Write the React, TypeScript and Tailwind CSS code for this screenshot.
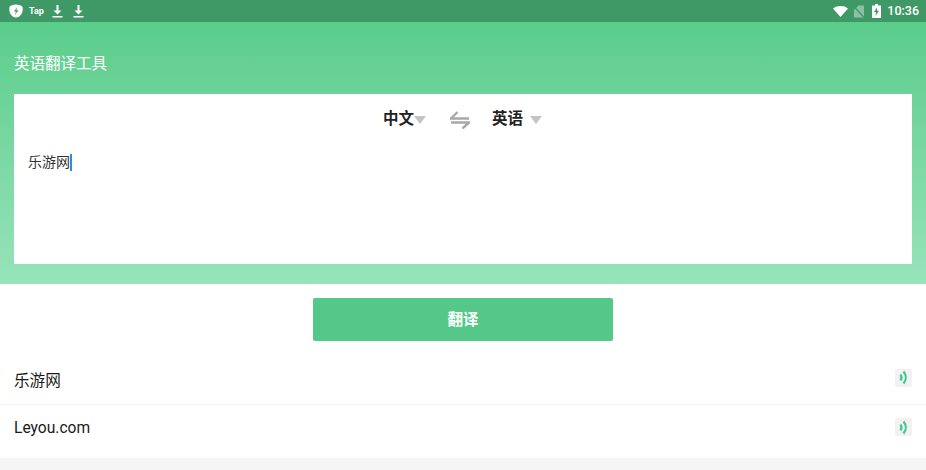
const font = { fontFamily: 'Roboto, "Noto Sans CJK SC", sans-serif' };

function SpeakerButton() {
  return (
    <div className="flex h-[18px] w-[17px] items-center justify-center rounded-[2px] bg-[#f1f3f2]">
      <svg width="10" height="15" viewBox="0 0 10 15" fill="none" stroke="#3fc793" strokeWidth="2.200">
        <path d="M1.500 4.500c1.200 1.800 1.200 4.200 0 6" />
        <path d="M4.500 1.500c3 3.600 3 8.400 0 12" />
      </svg>
    </div>
  );
}

function Caret() {
  return <div className="h-0 w-0 border-x-[6.5px] border-t-[8px] border-x-transparent border-t-[#c4c4c4]" />;
}

function DownloadIcon({ className }: { className: string }) {
  return (
    <svg className={className} width="11" height="14" viewBox="0 0 11 14" fill="white">
      <path d="M4.500 1h2v5.500h3l-4 4-4-4h3z" />
      <rect x="0.500" y="12" width="10" height="1.500" />
    </svg>
  );
}

function StatusBar() {
  return (
    <div className="flex h-[22px] items-center justify-between bg-[#3f9966] pl-[9px] pr-[7px] text-white">
      <div className="flex items-center">
        <svg width="14" height="14" viewBox="0 0 14 14" fill="white">
          <path d="M7 .5C9 .5 13 1.500 13.500 3c.4 1.500.3 4-.5 6-1 2.500-3.500 4.500-6 4.500S2 11.500 1 9C.2 7 .1 4.500.5 3 1 1.500 5 .5 7 .5z" />
          <path d="M8.500 3 4.800 7.500h2.200L5.800 11l3.700-4.700H7.200z" fill="#3f9966" />
        </svg>
        <span className="ml-[6px] text-[9px] font-bold leading-none">Tap</span>
        <DownloadIcon className="ml-[8px]" />
        <DownloadIcon className="ml-[10px]" />
      </div>
      <div className="flex items-center">
        <svg width="15" height="11" viewBox="0 0 15 11" fill="white">
          <path d="M0 2.500C4-.8 11-.8 15 2.500L7.500 11z" />
        </svg>
        <svg className="ml-[6px]" width="10" height="13" viewBox="0 0 10 13">
          <path d="M4.500 .5H10v12H0V5z" fill="#8cc0a3" />
          <path d="M0 1.500 10 12.500" stroke="#3f9966" strokeWidth="1.200" />
        </svg>
        <svg className="ml-[8px]" width="9" height="14" viewBox="0 0 9 14" fill="white">
          <path d="M3 0h3v1.500h3V14H0V1.500h3z" />
          <path d="M5 3.500 2 8h2L3.500 12 7 6.800H5z" fill="#3f9966" />
        </svg>
        <span className="ml-[6px] text-[12.5px] font-medium leading-none">10:36</span>
      </div>
    </div>
  );
}

export default function App() {
  return (
    <div className="flex h-[470px] w-[926px] flex-col overflow-hidden bg-white" style={font}>
      <StatusBar />

      <div className="h-[262px] bg-gradient-to-b from-[#5acd8b] to-[#97e3ba] px-[14px]">
        <div className="flex h-[72px] items-center pt-[14px] text-[15.5px] text-white">英语翻译工具</div>

        <div className="h-[169.5px] bg-white">
          <div className="flex h-[52px] items-center pl-[369px] text-[15.5px] font-bold text-[#222222]">
            <span>中文</span>
            <Caret />
            <svg className="ml-[24px]" width="20" height="18" viewBox="0 0 20 18" fill="none" stroke="#a8a8a8" strokeWidth="2.400">
              <path d="M0 7.500h19M1 7.500l6.500-6.500" />
              <path d="M20 11.500H1M19 11.500l-6.500 6" />
            </svg>
            <span className="ml-[22px]">英语</span>
            <div className="ml-[7px]">
              <Caret />
            </div>
          </div>
          <div className="flex h-[20px] items-center pl-[14px] pt-[13px] text-[14px] text-[#333333]">
            乐游网
            <div className="h-[17px] w-[1.500px] bg-[#2f8fd0]" />
          </div>
        </div>
      </div>

      <div className="flex justify-center pt-[14px]">
        <div className="flex h-[43px] w-[300px] items-center justify-center rounded-[2px] bg-[#53c888] pt-[3px] text-[15.5px] font-bold text-white">
          翻译
        </div>
      </div>

      <div className="mt-[17px] flex h-[47px] items-center justify-between border-b border-[#f6f6f6] px-[14px] pt-[2px] text-[15.600px] text-[#1a1a1a]">
        <span>乐游网</span>
        <div className="mb-[9px]">
          <SpeakerButton />
        </div>
      </div>
      <div className="flex h-[53px] items-start justify-between px-[14px] pt-[12px] text-[15.600px] text-[#1a1a1a]">
        <span>Leyou.com</span>
        <div className="mt-[1px]">
          <SpeakerButton />
        </div>
      </div>
      <div className="flex-1 bg-[#f5f5f5]" />
    </div>
  );
}
